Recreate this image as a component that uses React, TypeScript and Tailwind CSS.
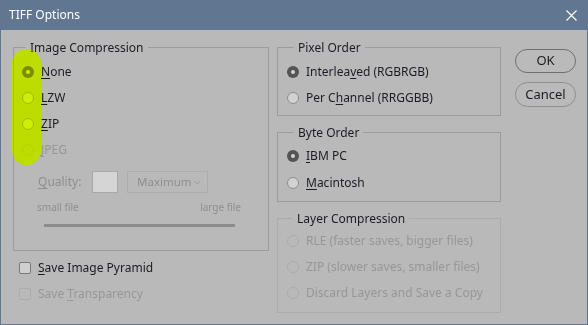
import React from "react";

function Radio({ checked = false, disabled = false }: { checked?: boolean; disabled?: boolean }) {
  if (checked) {
    return (
      <span className="w-[12px] h-[12px] shrink-0 rounded-full bg-[#545454] flex items-center justify-center">
        <span className="w-[4px] h-[4px] rounded-full bg-[#d4d4d4]" />
      </span>
    );
  }
  if (disabled) {
    return <span className="w-[12px] h-[12px] shrink-0 rounded-full border border-[#acacac] bg-[#b9b9b9]" />;
  }
  return <span className="w-[12px] h-[12px] shrink-0 rounded-full border border-[#8e8e8e] bg-[#d2d2d2]" />;
}

function Row({
  children,
  checked,
  disabled,
}: {
  children: React.ReactNode;
  checked?: boolean;
  disabled?: boolean;
}) {
  return (
    <div className={"flex items-center h-[26px] gap-[7px] " + (disabled ? "text-[#979797]" : "")}>
      <Radio checked={checked} disabled={disabled} />
      <span>{children}</span>
    </div>
  );
}

const U = ({ children }: { children: React.ReactNode }) => (
  <span className="underline underline-offset-[2px] decoration-[1px]">{children}</span>
);

export default function App() {
  return (
    <div className="relative w-[588px] h-[325px] bg-[#b9b9b9] border-x border-b border-[#63768f] flex flex-col font-['Noto_Sans',sans-serif] text-[12px] text-[#1d1b24] overflow-hidden">
      <div className="h-[30px] shrink-0 bg-[#617690] flex items-center justify-between pl-[8px] pr-[10px] text-white text-[12px]">
        <span>TIFF Options</span>
        <svg width="11" height="11" viewBox="0 0 11 11">
          <path d="M0.5 0.5L10.5 10.5M10.5 0.5L0.5 10.5" stroke="#fff" strokeWidth="1.2" />
        </svg>
      </div>

      <div className="flex pl-[12px] pt-[9px]">
        {/* left column */}
        <div className="flex flex-col w-[256px]">
          <fieldset className="w-[256px] h-[212px] border border-[#9c9c9c] px-[8px]">
            <legend className="ml-[4px] px-[4px] leading-[17px]">Image Compression</legend>
            <div className="pt-[3px] flex flex-col">
              <Row checked>
                <U>N</U>one
              </Row>
              <Row>
                <U>L</U>ZW
              </Row>
              <Row>
                <U>Z</U>IP
              </Row>
              <Row disabled>
                <U>J</U>PEG
              </Row>
              <div className="flex items-center h-[26px] mt-[6px] ml-[16px] text-[#8f8f8f]">
                <span className="w-[54px]">
                  <U>Q</U>uality:
                </span>
                <span className="w-[26px] h-[22px] border border-[#a8a8a8] bg-[#d5d5d5]" />
                <span className="ml-[9px] w-[81px] h-[22px] border border-[#acacac] flex items-center justify-between pl-[9px] pr-[6px]">
                  <span className="text-[11.5px]">Maximum</span>
                  <svg width="7" height="5" viewBox="0 0 7 5">
                    <path d="M0.5 1L3.5 4L6.5 1" fill="none" stroke="#9a9a9a" strokeWidth="1" />
                  </svg>
                </span>
              </div>
              <div className="flex justify-between items-center h-[14px] mt-[5px] ml-[15px] w-[204px] text-[10px] text-[#8f8f8f]">
                <span>small file</span>
                <span>large file</span>
              </div>
              <div className="mt-[10px] ml-[22px] w-[191px] h-[3px] bg-[#8c8c8c]" />
            </div>
          </fieldset>
          <div className="flex items-center h-[26px] mt-[4px] ml-[6px] gap-[7px]">
            <span className="w-[12px] h-[12px] rounded-[2px] border border-[#7a7a7a] bg-[#cfcfcf]" />
            <span>
              <U>S</U>ave Image Pyramid
            </span>
          </div>
          <div className="flex items-center h-[26px] ml-[6px] gap-[7px] text-[#979797]">
            <span className="w-[12px] h-[12px] rounded-[2px] border border-[#acacac]" />
            <span>
              Save <U>T</U>ransparency
            </span>
          </div>
        </div>

        {/* right column */}
        <div className="flex flex-col ml-[8px] w-[224px]">
          <fieldset className="h-[77px] border border-[#9c9c9c] px-[9px]">
            <legend className="ml-[7px] px-[4px] leading-[17px]">Pixel Order</legend>
            <div className="pt-[3px] flex flex-col">
              <Row checked>
                Interlea<U>v</U>ed (RGBRGB)
              </Row>
              <Row>
                Per C<U>h</U>annel (RRGGBB)
              </Row>
            </div>
          </fieldset>
          <fieldset className="mt-[8px] h-[78px] border border-[#9c9c9c] px-[9px]">
            <legend className="ml-[7px] px-[4px] leading-[17px]">Byte Order</legend>
            <div className="pt-[2px] flex flex-col">
              <Row checked>
                <U>I</U>BM PC
              </Row>
              <div className="h-[1px]" />
              <Row>
                <U>M</U>acintosh
              </Row>
            </div>
          </fieldset>
          <fieldset className="mt-[8px] h-[103px] border border-[#acacac] px-[9px]">
            <legend className="ml-[6px] px-[4px] leading-[17px]">Layer Compression</legend>
            <div className="pt-[1px] flex flex-col">
              <Row disabled>RLE (faster saves, bigger files)</Row>
              <Row disabled>ZIP (slower saves, smaller files)</Row>
              <Row disabled>Discard Layers and Save a Copy</Row>
            </div>
          </fieldset>
        </div>

        {/* buttons */}
        <div className="flex flex-col ml-[14px] pt-[10px] gap-[9px]">
          <button className="w-[61px] h-[24px] rounded-full border border-[#6f6f6f] bg-[#bababa] text-[13px] text-[#1d1b24] flex items-center justify-center">
            OK
          </button>
          <button className="w-[61px] h-[25px] rounded-full border border-[#8f8f8f] bg-[#bababa] text-[13px] text-[#1d1b24] flex items-center justify-center">
            Cancel
          </button>
        </div>
      </div>

      {/* highlighter mark over the compression radios */}
      <div className="absolute left-[11px] top-[49px] w-[29px] h-[116px] rounded-[15px] bg-[#c8ea00] mix-blend-color" />
      <div className="absolute left-[11px] top-[49px] w-[29px] h-[116px] rounded-[15px] bg-[#c2e000]/35" />
    </div>
  );
}
